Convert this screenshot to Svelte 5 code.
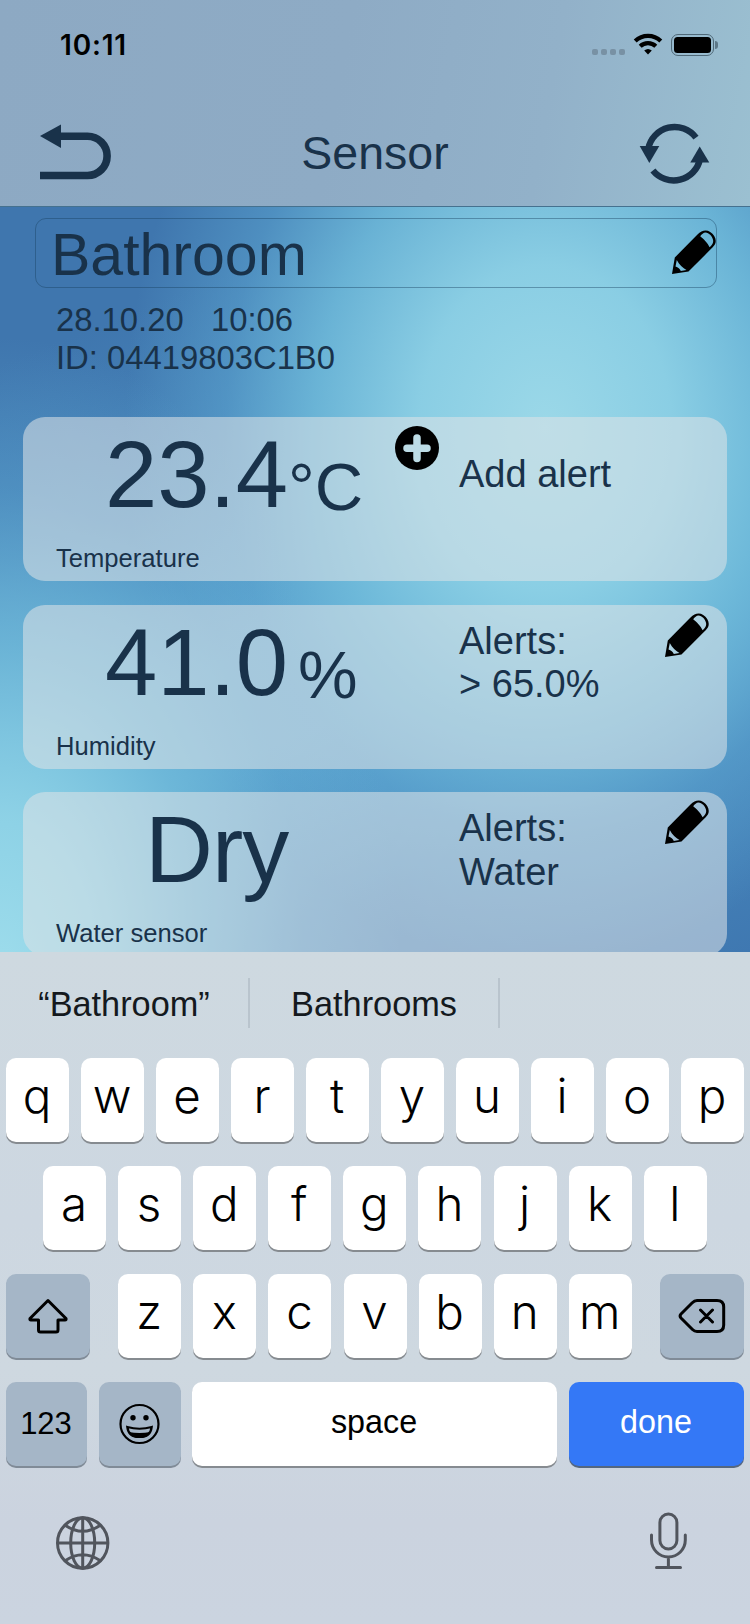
<script lang="ts">
  type Sensor = {
    label: string;
    value: string;
    unit: string;
    alerts: string[];
  };

  let name = 'Bathroom';

  const sensors: Sensor[] = [
    { label: 'Temperature', value: '23.4', unit: '°C', alerts: [] },
    { label: 'Humidity', value: '41.0', unit: '%', alerts: ['> 65.0%'] },
    { label: 'Water sensor', value: 'Dry', unit: '', alerts: ['Water'] }
  ];

  const suggestions = ['“Bathroom”', 'Bathrooms', ''];
  const topRow = 'qwertyuiop'.split('');
  const middleRow = 'asdfghjkl'.split('');
  const bottomRow = 'zxcvbnm'.split('');
</script>

<svelte:head>
  <title>Sensor</title>
</svelte:head>

{#snippet pencil()}
  <svg class="pencil" viewBox="0 0 44 44" width="44" height="44">
    <path
      fill-rule="evenodd"
      d="M0 44 L2.800 27.500 L25.500 4.600 C29.500 .6 34 -.8 38.200 2 C42.800 5 45.300 10.400 42.700 14.800 C41.500 16.600 40 18 38.400 19.600 L16.500 41.600 Z
         M28.200 6.200 C31 8.300 35.800 13 37.600 17.200 C39.800 15 41.800 12.800 41 9.800 C40 6 37 2.900 33.500 2.600 C31.400 2.700 29.800 4.400 28.200 6.200 Z
         M4.800 30 L3.500 36.400 C6 37 8 39 8.800 41 L14.500 40 C11 38.200 7 34.500 4.800 30 Z"
    />
  </svg>
{/snippet}

<div class="screen">
  <header>
    <div class="status">
      <span class="time">10:11</span>
      <div class="status-icons">
        <div class="dots"><i></i><i></i><i></i><i></i></div>
        <svg width="30" height="22" viewBox="0 0 30 22">
          <path d="M2.200 8 A18.500 18.500 0 0 1 27.800 8" />
          <path d="M7.200 13.200 A11.200 11.200 0 0 1 22.800 13.200" />
          <path class="solid" d="M15 21.500 L11.200 17.600 Q15 14.200 18.800 17.600 Z" />
        </svg>
        <div class="battery"><div class="charge"></div></div>
      </div>
    </div>
    <div class="nav">
      <svg class="back" width="74" height="62" viewBox="0 0 74 62">
        <path d="M2 14 L23 2.500 V26 Z" />
        <path class="line" d="M21 14.300 H49.500 A19.600 19.600 0 0 1 49.500 53.500 H2" />
      </svg>
      <h1>Sensor</h1>
      <svg class="refresh" width="72" height="64" viewBox="0 0 72 64">
        <path class="line" d="M58 15.700 A26.800 26.800 0 0 0 10.200 27" />
        <path class="line" d="M14.900 48.500 A26.800 26.800 0 0 0 62 37" />
        <path d="M1.700 24 H21.300 L11.300 41 Z" />
        <path d="M52.300 40.600 H71.300 L61.700 24.500 Z" />
      </svg>
    </div>
  </header>

  <main>
    <div class="name-field">
      <span>{name}</span>
      {@render pencil()}
    </div>
    <div class="meta">28.10.20&nbsp;&nbsp; 10:06<br />ID: 04419803C1B0</div>

    <div class="cards">
      {#each sensors as sensor}
        <section class="card">
          <div class="main">
            <div class="reading" class:word={!sensor.unit}>
              <span class="value">{sensor.value}</span>
              {#if sensor.unit}
                <span class="unit" class:percent={sensor.unit === '%'}>{sensor.unit}</span>
              {/if}
            </div>
            <div class="label">{sensor.label}</div>
          </div>
          <div class="add">
            {#if sensor.alerts.length === 0}
              <svg width="44" height="44" viewBox="0 0 44 44">
                <circle cx="22" cy="22" r="22" />
                <path d="M22 12 V32.500 M12 22.200 H32" />
              </svg>
            {/if}
          </div>
          <div class="alerts" class:empty={sensor.alerts.length === 0}>
            {#if sensor.alerts.length === 0}
              <div>Add alert</div>
            {:else}
              <div>Alerts:</div>
              {#each sensor.alerts as alert}
                <div>{alert}</div>
              {/each}
            {/if}
          </div>
          {#if sensor.alerts.length > 0}
            {@render pencil()}
          {/if}
        </section>
      {/each}
    </div>
  </main>

  <div class="keyboard">
    <div class="suggestions">
      {#each suggestions as word}
        <div class="suggestion">{word}</div>
      {/each}
    </div>

    <div class="row">
      {#each topRow as key}
        <div class="key">{key}</div>
      {/each}
    </div>
    <div class="row middle">
      {#each middleRow as key}
        <div class="key">{key}</div>
      {/each}
    </div>
    <div class="row bottom">
      <div class="key dark shift">
        <svg width="40" height="36" viewBox="0 0 40 36">
          <path d="M20 2.500 L38 20.500 Q38.500 22 37 22 H30 V32 Q30 34 28 34 H12.500 Q10.500 34 10.500 32 V22 H3 Q1.500 22 2 20.500 Z" />
        </svg>
      </div>
      <div class="letters">
        {#each bottomRow as key}
          <div class="key">{key}</div>
        {/each}
      </div>
      <div class="key dark shift">
        <svg width="48" height="36" viewBox="0 0 48 36">
          <path d="M19 2.500 H39 Q45.700 2.500 45.700 9 V27 Q45.700 33.500 39 33.500 H19 Q16.500 33.500 14.500 31.500 L3 20 Q1.200 18 3 16 L14 5 Q16.500 2.500 19 2.500 M22.500 12 L34.500 24 M34.500 12 L22.500 24" />
        </svg>
      </div>
    </div>
    <div class="row last">
      <div class="key dark numbers">123</div>
      <div class="key dark emoji">
        <svg width="42" height="42" viewBox="0 0 42 42">
          <circle class="ring" cx="20.500" cy="21" r="19" />
          <circle cx="14" cy="14.700" r="2.700" />
          <circle cx="27" cy="14.700" r="2.700" />
          <path class="ring" d="M8.300 24 Q20.500 27.500 32.700 24 Q31.500 34 20.500 34 Q9.500 34 8.300 24 Z" />
          <path d="M9.500 29 Q20.500 31 31.500 29 Q28.500 35 20.500 35 Q12.500 35 9.500 29 Z" />
        </svg>
      </div>
      <div class="key space">space</div>
      <div class="key done">done</div>
    </div>

    <div class="dock">
      <svg class="globe" width="54" height="54" viewBox="0 0 54 54">
        <circle cx="26.700" cy="27" r="25.200" />
        <ellipse cx="26.700" cy="27" rx="12" ry="25.200" />
        <path d="M26.700 2 V52 M2 27 H51.500 M9.500 9.500 Q26.700 21 44 9.500 M9.500 44.500 Q26.700 33 44 44.500" />
      </svg>
      <svg class="mic" width="38" height="58" viewBox="0 0 38 58">
        <rect x="9.900" y="2" width="17" height="35" rx="8.500" />
        <path d="M1.500 23 V28 A16.900 16.900 0 0 0 35.300 28 V23 M18.400 45 V55.500 M6.500 55.500 H30.500" />
      </svg>
    </div>
  </div>
</div>

<style>
  :global(body) {
    margin: 0;
  }

  .screen {
    width: 750px;
    height: 1624px;
    overflow: hidden;
    display: flex;
    flex-direction: column;
    font-family: 'Liberation Sans', Arial, sans-serif;
    color: #19324a;
  }

  svg {
    display: block;
    flex: none;
  }

  header {
    box-sizing: border-box;
    height: 207px;
    flex: none;
    border-bottom: 1px solid #45718f;
    background: linear-gradient(100deg, #8da9c3 0%, #8eabc5 45%, #92b1c9 72%, #9bc0d1 100%);
  }

  /* Status bar */
  .status {
    height: 90px;
    box-sizing: border-box;
    padding: 29px 32px 0 60px;
    display: flex;
    justify-content: space-between;
    align-items: flex-start;
  }

  .time {
    font: 600 28px/32px Inter, sans-serif;
    letter-spacing: 0.8px;
    color: #000;
  }

  .status-icons {
    display: flex;
    align-items: flex-start;
    padding-top: 4px;
  }

  .status-icons svg {
    fill: none;
    stroke: #000;
    stroke-width: 4.2;
    margin: 0 8px 0 8px;
  }

  .status-icons .solid {
    fill: #000;
    stroke: none;
  }

  .dots {
    display: flex;
    gap: 3px;
    padding-top: 16px;
  }

  .dots i {
    width: 6px;
    height: 6px;
    border-radius: 2px;
    background: #7891a4;
  }

  .battery {
    position: relative;
    box-sizing: border-box;
    width: 43px;
    height: 22px;
    margin-top: 1px;
    margin-right: 4px;
    padding: 2px;
    border: 1px solid #4f6877;
    border-radius: 7px;
  }

  .battery::after {
    content: '';
    position: absolute;
    right: -5px;
    top: 6px;
    width: 3px;
    height: 8px;
    border-radius: 0 4px 4px 0;
    background: #5d7888;
  }

  .charge {
    height: 100%;
    border-radius: 3.5px;
    background: #000;
  }

  .nav {
    display: flex;
    justify-content: space-between;
    align-items: flex-start;
    padding: 32px 40px 0 38px;
    fill: #19324a;
  }

  .nav .line {
    fill: none;
    stroke: #19324a;
    stroke-width: 7.6;
  }

  .nav .refresh .line {
    stroke-width: 6.4;
  }

  h1 {
    margin: 3px 0 0 0;
    font-size: 46.5px;
    line-height: 56px;
    font-weight: 400;
  }

  main {
    height: 745px;
    flex: none;
    box-sizing: border-box;
    overflow: hidden;
    padding: 11px 23px 0;
    background:
      radial-gradient(ellipse 400px 640px at 0 770px, #9eddec 0%, rgba(144, 212, 231, 0.95) 25%, rgba(115, 190, 220, 0.75) 52%, rgba(98, 173, 212, 0.35) 76%, rgba(91, 163, 207, 0) 100%),
      radial-gradient(ellipse 420px 540px at 545px 220px, #9bd8e8 0%, rgba(140, 208, 229, 0.97) 30%, rgba(112, 188, 219, 0.85) 55%, rgba(94, 168, 210, 0.5) 76%, rgba(80, 150, 198, 0) 100%),
      linear-gradient(158deg, #3f76ae 15%, #4785ba 34%, #5aa2ce 52%, #5aa2ce 62%, #4887bc 80%, #3f78b1 100%);
  }

  .name-field {
    box-sizing: border-box;
    width: 682px;
    height: 70px;
    margin-left: 12px;
    padding: 11px 0 0 15px;
    border: 1px solid rgba(25, 65, 95, 0.42);
    border-radius: 11px;
    display: flex;
    justify-content: space-between;
  }

  .name-field span {
    font-size: 59px;
    line-height: 50px;
  }

  .meta {
    margin: 13px 0 0 33px;
    font-size: 32.8px;
    line-height: 37.5px;
  }

  .cards {
    display: flex;
    flex-direction: column;
    gap: 23.5px;
    margin-top: 41px;
  }

  .card {
    height: 164px;
    flex: none;
    display: flex;
    align-items: flex-start;
    border-radius: 22px;
    background: rgba(221, 227, 230, 0.56);
  }

  .main {
    width: 372px;
    flex: none;
  }

  .reading {
    display: flex;
    align-items: baseline;
    height: 93px;
    padding: 12px 0 0 82px;
  }

  .word {
    padding-left: 122px;
  }

  .value {
    font-size: 94px;
    line-height: 91px;
  }

  .word .value {
    letter-spacing: -1px;
  }

  .unit {
    position: relative;
    top: 3px;
    font-size: 67px;
    line-height: 65px;
  }

  .percent {
    margin-left: 10px;
  }

  .label {
    margin: 21px 0 0 33px;
    font-size: 25.6px;
    line-height: 30px;
  }

  .add {
    width: 64px;
    flex: none;
    padding-top: 9px;
  }

  .add path {
    stroke: #bddce6;
    stroke-width: 7.5;
    stroke-linecap: round;
  }

  .alerts {
    width: 206px;
    flex: none;
    padding-top: 15px;
    font-size: 38px;
    line-height: 43.5px;
  }

  .alerts.empty {
    padding-top: 36px;
  }

  .card .pencil {
    margin-top: 8px;
  }

  /* Keyboard */
  .keyboard {
    flex: 1;
    color: #000;
    background: linear-gradient(180deg, #ced9e0 0%, #cdd7e1 40%, #ced8e0 62%, #cbd3df 85%, #cbd4e0 100%);
  }

  .suggestions {
    display: flex;
    height: 106px;
    box-sizing: border-box;
    padding-top: 26px;
  }

  .suggestion {
    box-sizing: border-box;
    width: 250px;
    height: 50px;
    border-right: 2px solid #b9c4cd;
    text-align: center;
    font-size: 34.3px;
    line-height: 52px;
    color: #14191e;
  }

  .suggestion:last-child {
    border-right: 0;
  }

  .row {
    display: flex;
    gap: 12px;
    padding: 0 6px;
    margin-bottom: 24px;
  }

  .middle {
    padding: 0 43px;
    gap: 12.1px;
  }

  .bottom {
    justify-content: space-between;
    gap: 0;
  }

  .letters {
    display: flex;
    gap: 12.1px;
  }

  .key {
    width: 63px;
    height: 84px;
    flex: none;
    border-radius: 10px;
    background: #fff;
    box-shadow: 0 2px 0 #868b90;
    text-align: center;
    font: 350 47.5px/75px Inter, sans-serif;
    text-indent: -1px;
  }

  .dark {
    background: #a5b6c7;
    box-shadow: 0 2px 0 #808b97;
  }

  .shift {
    width: 84px;
    display: flex;
    align-items: center;
    justify-content: center;
  }

  .shift svg {
    fill: none;
    stroke: #000;
    stroke-width: 3;
    stroke-linejoin: round;
    stroke-linecap: round;
  }

  .last .key {
    font: 400 32.3px/80px 'Liberation Sans', Arial, sans-serif;
  }

  .last .numbers {
    width: 81px;
    font-size: 31px;
    line-height: 84px;
  }

  .last .emoji {
    width: 82px;
    display: flex;
    align-items: center;
    justify-content: center;
  }

  .emoji .ring {
    fill: none;
    stroke: #000;
    stroke-width: 2.2;
  }

  .last .space {
    width: 365px;
    margin-left: -1px;
  }

  .last .done {
    flex: 1;
    color: #fff;
    background: #3478f6;
    box-shadow: 0 2px 0 #55677f;
  }

  .dock {
    display: flex;
    justify-content: space-between;
    padding: 22px 62px 0 56px;
    fill: none;
    stroke: #51555d;
    stroke-width: 3;
    stroke-linecap: round;
  }

  .globe {
    margin-top: 4px;
  }
</style>
